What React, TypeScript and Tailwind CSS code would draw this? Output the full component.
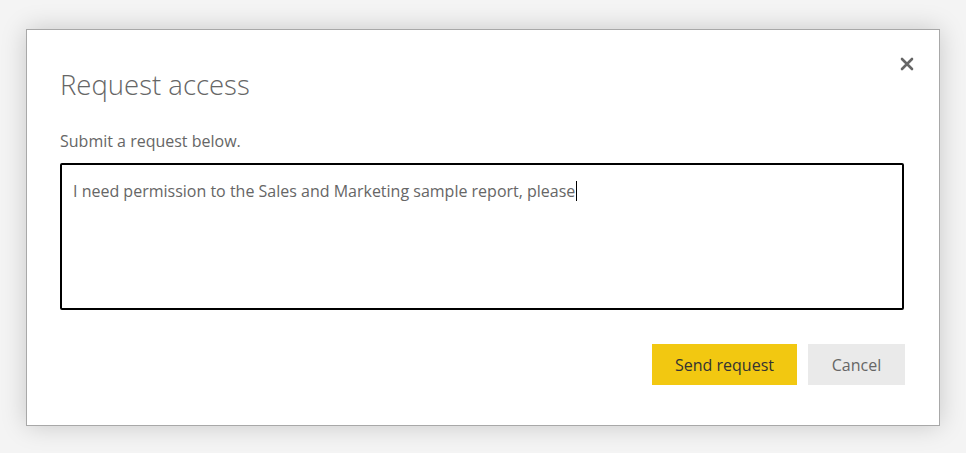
export default function App() {
  return (
    <div
      className="min-h-screen bg-[#f4f4f4] pl-[26px] pt-[29px]"
      style={{ fontFamily: '"Open Sans", "Noto Sans", sans-serif' }}
    >
      <div className="relative flex h-[397px] w-[914px] flex-col border border-[#a8a8a8] bg-white pl-[33px] pr-[35px] shadow-[0_0_24px_rgba(0,0,0,0.18)]">
        {/* Close */}
        <button className="absolute right-[24px] top-[26px] flex h-[16px] w-[16px] items-center justify-center text-[#666]">
          <svg width="14" height="14" viewBox="0 0 14 14">
            <path d="M2 2 L12 12 M12 2 L2 12" stroke="#666" strokeWidth="2.6" strokeLinecap="round" />
          </svg>
        </button>

        <h1 className="mt-[37px] text-[27.5px] font-light leading-[36px] text-[#666]">Request access</h1>
        <p className="mt-[26px] text-[16px] leading-[24px] text-[#666]">Submit a request below.</p>

        <div className="mt-[10px] h-[147px] w-full rounded-[2px] border-2 border-black px-[11px] py-[12px]">
          <span className="text-[16px] leading-[24px] text-[#666]">
            I need permission to the Sales and Marketing sample report, please
          </span>
          <span className="ml-px inline-block h-[20px] w-px translate-y-[4px] bg-black" />
        </div>

        <div className="-mr-px mt-[34px] flex justify-end gap-[11px]">
          <button className="h-[41px] w-[145px] bg-[#f2c811] text-[16px] text-[#333]">Send request</button>
          <button className="h-[41px] w-[97px] bg-[#eaeaea] text-[16px] text-[#666]">Cancel</button>
        </div>
      </div>
    </div>
  );
}
